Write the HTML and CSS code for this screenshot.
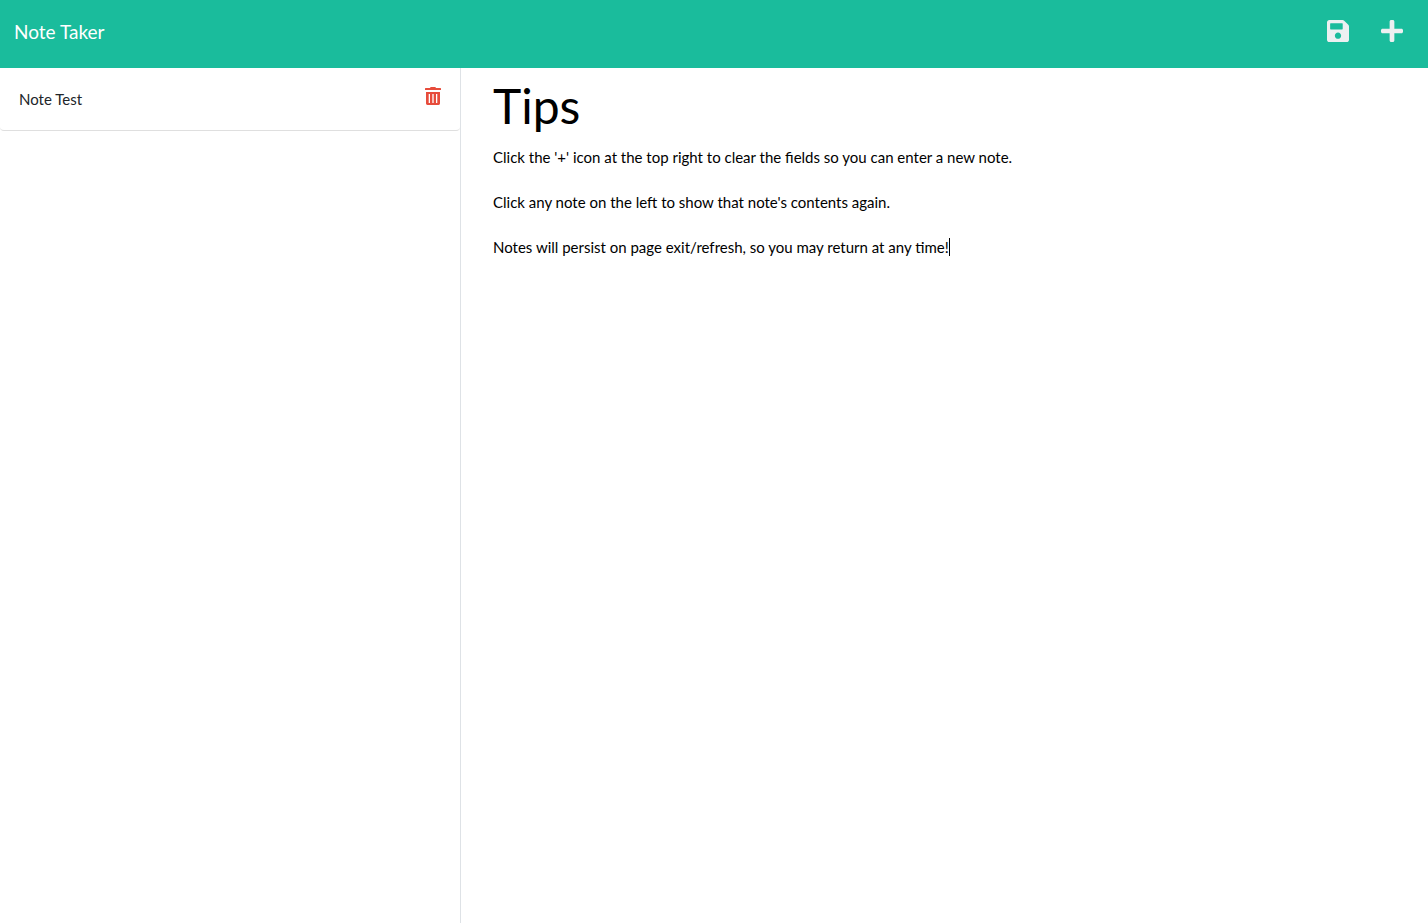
FILE: index.html
```html
<!DOCTYPE html>
<html lang="en">
<head>
<meta charset="utf-8">
<meta name="viewport" content="width=device-width, initial-scale=1">
<title>Note Taker</title>
<link rel="stylesheet" href="styles.css">
</head>
<body>
<nav class="navbar">
  <a class="brand" href="/">Note Taker</a>
  <div class="actions">
    <button class="icon-button" type="button" aria-label="Save note"><svg class="save-icon" viewBox="0 0 448 512" aria-hidden="true"><path d="M433.941 129.941l-83.882-83.882A48 48 0 0 0 316.118 32H48C21.49 32 0 53.49 0 80v352c0 26.51 21.49 48 48 48h352c26.51 0 48-21.49 48-48V163.882a48 48 0 0 0-14.059-33.941zM224 416c-35.346 0-64-28.654-64-64 0-35.346 28.654-64 64-64s64 28.654 64 64c0 35.346-28.654 64-64 64zm96-304.52V212c0 6.627-5.373 12-12 12H76c-6.627 0-12-5.373-12-12V108c0-6.627 5.373-12 12-12h228.52c3.183 0 6.235 1.264 8.485 3.515l3.48 3.48A11.996 11.996 0 0 1 320 111.48z"/></svg></button>
    <button class="icon-button" type="button" aria-label="New note"><svg class="plus-icon" viewBox="0 0 448 512" aria-hidden="true"><path d="M416 208H272V64c0-17.67-14.33-32-32-32h-32c-17.67 0-32 14.33-32 32v144H32c-17.67 0-32 14.33-32 32v32c0 17.67 14.33 32 32 32h144v144c0 17.67 14.33 32 32 32h32c17.67 0 32-14.33 32-32V304h144c17.67 0 32-14.33 32-32v-32c0-17.67-14.33-32-32-32z"/></svg></button>
  </div>
</nav>
<main class="workspace">
  <aside class="sidebar">
    <ul class="note-list">
      <li class="note-item">
        <button class="note-name" type="button">Note Test</button>
        <button class="delete-button" type="button" aria-label="Delete note"><svg class="trash-icon" viewBox="0 0 16 19" aria-hidden="true"><path fill-rule="evenodd" d="M.6 1H5L5.400.3Q5.600 0 6 0h4q.4 0 .6.3L11 1h4.400q.6 0 .6.6V3H0V1.600Q0 1 .6 1zM1 5h14v11.600q0 1.400-1.400 1.400H2.400Q1 18 1 16.600zM3.700 7v9h1.300V7zM7.350 7v9h1.300V7zM11 7v9h1.300V7z"/></svg></button>
      </li>
    </ul>
  </aside>
  <section class="editor">
    <input class="note-title" type="text" aria-label="Note title" value="Tips">
    <div class="note-body">
      <textarea class="note-text" aria-label="Note text" spellcheck="false">Click the '+' icon at the top right to clear the fields so you can enter a new note.

Click any note on the left to show that note's contents again.

Notes will persist on page exit/refresh, so you may return at any time!</textarea>
      <span class="caret" aria-hidden="true"></span>
    </div>
  </section>
</main>
</body>
</html>
```
FILE: styles.css
```css
* {
  box-sizing: border-box;
}

body {
  display: flex;
  flex-direction: column;
  min-height: 100vh;
  margin: 0;
  background: #fff;
  color: #212529;
  font: 15px/1.5 Lato, sans-serif;
}

button,
input,
textarea {
  padding: 0;
  border: 0;
  background: none;
  color: inherit;
  font: inherit;
}

button {
  cursor: pointer;
}

svg {
  display: block;
  fill: currentColor;
}

.navbar {
  display: flex;
  align-items: flex-start;
  justify-content: space-between;
  height: 68px;
  padding: 18px 25px 0 14px;
  background: #1abc9c;
}

.brand {
  color: #fff;
  font-size: 19px;
  line-height: 28px;
  text-decoration: none;
}

.actions {
  display: flex;
  gap: 32px;
  color: #ecf0f1;
}

.save-icon,
.plus-icon {
  width: 22px;
  height: 26px;
}

.workspace {
  display: grid;
  grid-template-columns: 461px 1fr;
  flex: 1;
}

.sidebar {
  border-right: 1px solid #dee2e6;
}

.note-list {
  margin: 0;
  padding: 0;
  list-style: none;
}

.note-item {
  display: flex;
  align-items: flex-start;
  justify-content: space-between;
  height: 63px;
  padding: 19px;
  border-bottom: 1px solid #dfdfdf;
  border-radius: 0 0 4px 4px;
}

.note-name {
  line-height: 24px;
}

.delete-button {
  color: #e74c3c;
}

.trash-icon {
  width: 16px;
  height: 19px;
}

.editor {
  display: flex;
  flex-direction: column;
  padding: 0 32px;
  color: #000;
}

.note-title {
  width: 100%;
  height: 74px;
  margin-bottom: 4px;
  font-size: 48px;
}

.note-body {
  position: relative;
  display: flex;
  flex: 1;
}

.note-text {
  width: 100%;
  outline: 0;
  resize: none;
}

/* Insertion point after the last line of the note */
.caret {
  position: absolute;
  top: 92px;
  left: 456px;
  width: 1px;
  height: 18px;
  background: #000;
}
```
